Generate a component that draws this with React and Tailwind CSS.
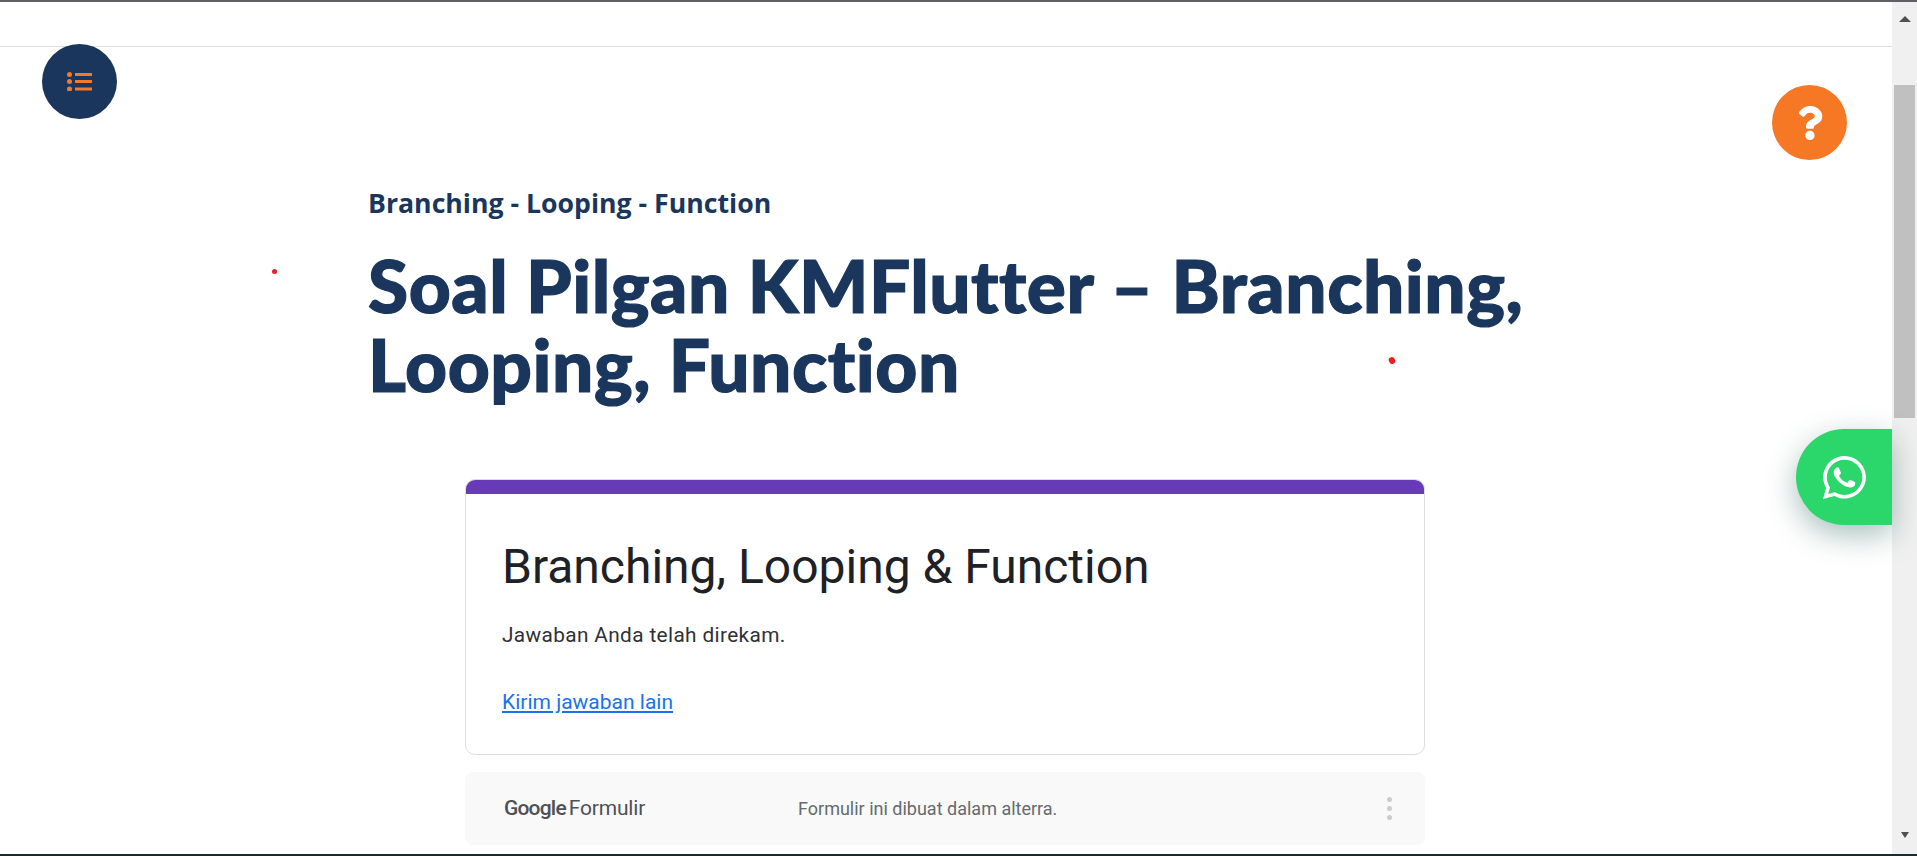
import React from "react";
import { FaQuestion, FaWhatsapp } from "react-icons/fa";

function Scrollbar() {
  return (
    <div className="w-[25px] shrink-0 bg-[#f0f0f0] flex flex-col items-center">
      <div className="h-[29px] flex items-center justify-center shrink-0 pt-1">
        <div className="w-0 h-0 border-l-[6px] border-r-[6px] border-b-[6px] border-l-transparent border-r-transparent border-b-[#505050]" />
      </div>
      <div className="mt-[54px] h-[333px] w-[21px] bg-[#c0c0c0] shrink-0" />
      <div className="flex-1" />
      <div className="h-[22px] flex items-start justify-center shrink-0">
        <div className="w-0 h-0 border-l-[4px] border-r-[4px] border-t-[6px] border-l-transparent border-r-transparent border-t-[#505050]" />
      </div>
    </div>
  );
}

function ListIcon() {
  return (
    <svg width="25" height="19" viewBox="0 0 25 19" fill="#f77825">
      <circle cx="2.5" cy="2.5" r="2.5" />
      <circle cx="2.5" cy="9.5" r="2.5" />
      <circle cx="2.5" cy="17" r="2.5" />
      <rect x="8" y="1" width="17" height="3" />
      <rect x="8" y="8" width="17" height="3" />
      <rect x="8" y="15.5" width="17" height="3" />
    </svg>
  );
}

export default function App() {
  return (
    <div className="h-[856px] w-[1917px] overflow-hidden bg-white flex flex-col font-['Open_Sans',sans-serif]">
      <div className="h-[2px] bg-[#5f5f63] shrink-0" />
      <div className="flex flex-1 min-h-0">
        <div className="relative flex-1 min-w-0 flex flex-col">
          <header className="h-[45px] shrink-0 border-b border-[#dedede]" />

          <main className="pl-[368px] pt-[138px]">
            <p className="font-['Open_Sans',sans-serif] font-bold text-[26.67px] leading-[36px] text-[#1a365d]">
              Branching - Looping - Function
            </p>
            <h1 className="mt-[25px] w-[1200px] font-['Lato',sans-serif] font-black text-[73px] leading-[79px] tracking-[0.5px] [font-variant-ligatures:none] [-webkit-text-stroke:1.2px_#1a365d] text-[#1a365d]">
              Soal Pilgan KMFlutter – Branching, Looping, Function
            </h1>

            <div className="ml-[97px] mt-[75px] w-[960px]">
              <section className="rounded-[10px] border border-[#dadce0] bg-white overflow-hidden h-[276px]">
                <div className="h-[15px] bg-[#673ab7] -mx-px -mt-px" />
                <div className="pl-[36px] pt-[41px] font-['Roboto',sans-serif]">
                  <h2 className="text-[48px] leading-[64px] font-normal text-[#202124]">
                    Branching, Looping &amp; Function
                  </h2>
                  <p className="mt-[24px] text-[20.8px] leading-[24px] tracking-[0.37px] text-[#303134]">
                    Jawaban Anda telah direkam.
                  </p>
                  <a className="block mt-[43px] text-[21px] leading-[24px] text-[#1a73e8] underline">
                    Kirim jawaban lain
                  </a>
                </div>
              </section>

              <footer className="mt-[17px] h-[73px] rounded-[8px] bg-[#f9f9f9] flex items-center font-['Roboto',sans-serif]">
                <div className="ml-[39px] w-[294px] flex items-baseline text-[#4d5156]">
                  <span className="text-[21px] font-medium tracking-[-0.8px]">Google</span>
                  <span className="ml-[3px] text-[21px] tracking-[-0.2px]">Formulir</span>
                </div>
                <span className="text-[18px] text-[#666a6e]">Formulir ini dibuat dalam alterra.</span>
                <div className="ml-auto mr-[33px] flex flex-col gap-1">
                  <span className="w-[5px] h-[5px] rounded-full bg-[#cccccc]" />
                  <span className="w-[5px] h-[5px] rounded-full bg-[#cccccc]" />
                  <span className="w-[5px] h-[5px] rounded-full bg-[#cccccc]" />
                </div>
              </footer>
            </div>
          </main>

          <button className="absolute left-[42px] top-[42px] w-[75px] h-[75px] rounded-full bg-[#1a365d] flex items-center justify-center">
            <ListIcon />
          </button>
          <button className="absolute left-[1772px] top-[83px] w-[75px] h-[75px] rounded-full bg-[#f67724] flex items-center justify-center text-white">
            <FaQuestion size={34} />
          </button>
          <button className="absolute right-0 top-[427px] w-[96px] h-[96px] rounded-l-[48px] bg-[#2bd66b] shadow-[0_10px_30px_rgba(30,90,80,0.38)] flex items-center justify-center text-white">
            <FaWhatsapp size={49} />
          </button>

          <span className="absolute left-[272px] top-[267px] w-[5px] h-[5px] rounded-full bg-[#ee1c25]" />
          <span className="absolute left-[1389px] top-[355px] w-[6px] h-[7px] rounded-full bg-[#ee1c25] rotate-[-30deg]" />
        </div>
        <Scrollbar />
      </div>
      <div className="h-[2px] bg-[#1c2b2f] shrink-0" />
    </div>
  );
}
